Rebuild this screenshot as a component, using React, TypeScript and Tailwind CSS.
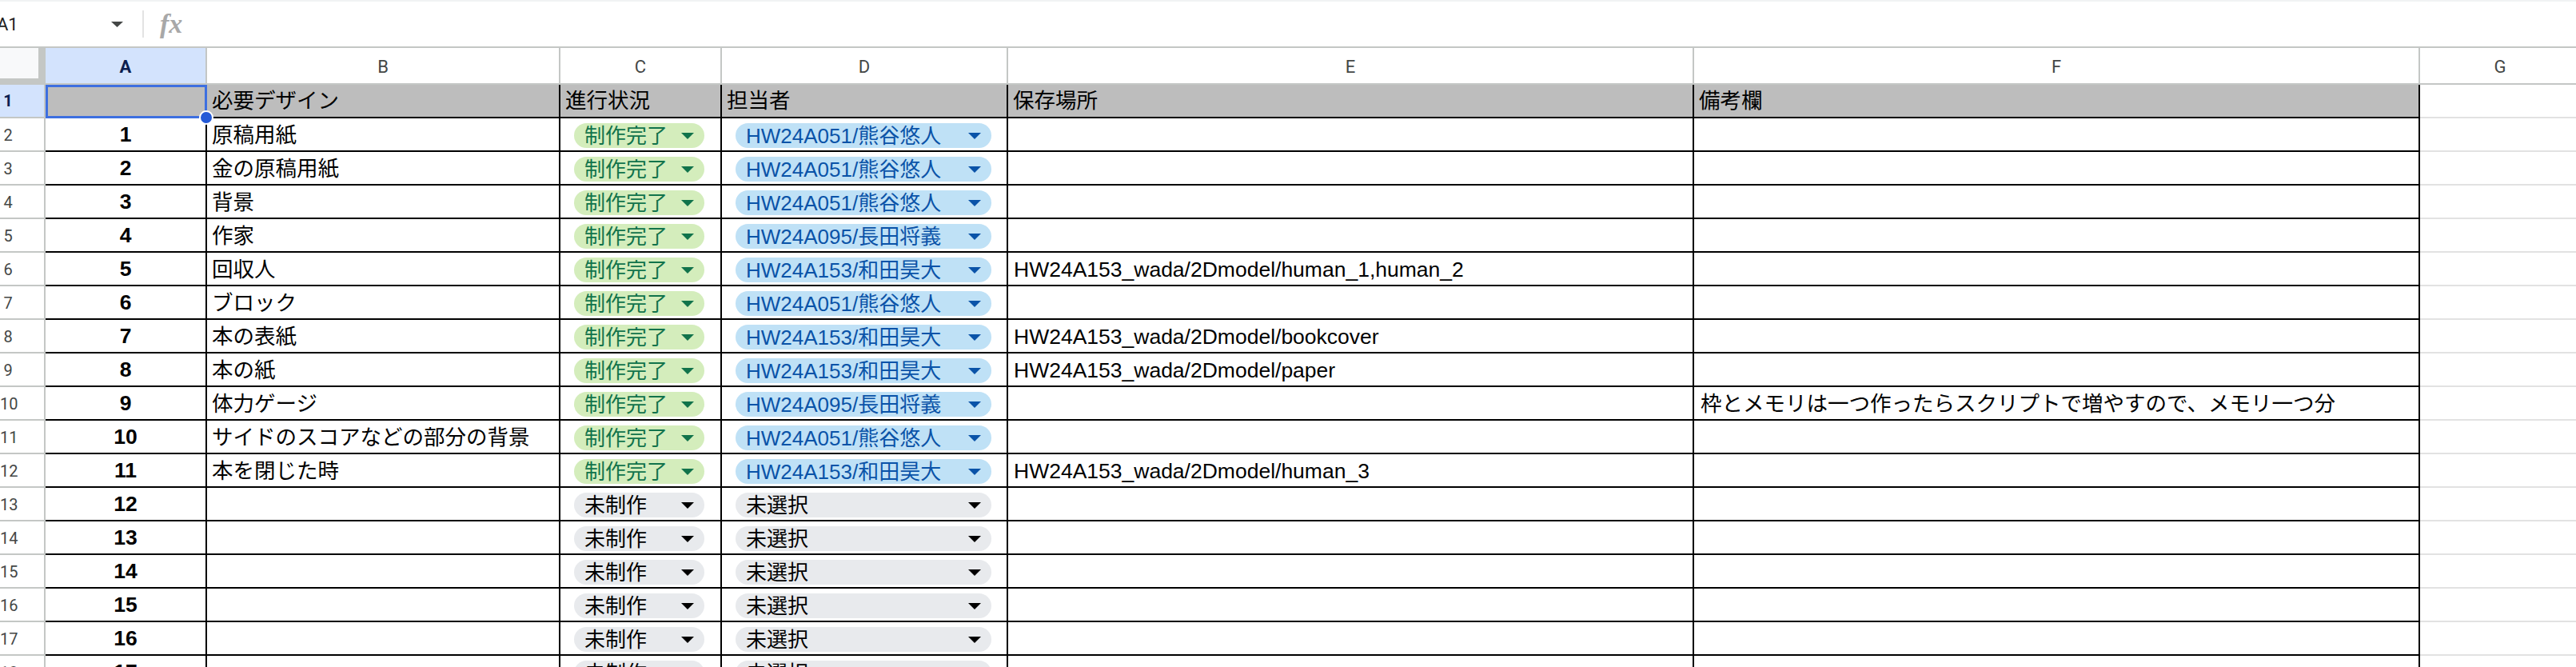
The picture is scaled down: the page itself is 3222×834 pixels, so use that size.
import React from "react";

type Item = {
  name: string;
  done: boolean;
  person?: string;
  path?: string;
  note?: string;
};

const items: Item[] = [
  { name: "原稿用紙", done: true, person: "HW24A051/熊谷悠人" },
  { name: "金の原稿用紙", done: true, person: "HW24A051/熊谷悠人" },
  { name: "背景", done: true, person: "HW24A051/熊谷悠人" },
  { name: "作家", done: true, person: "HW24A095/長田将義" },
  { name: "回収人", done: true, person: "HW24A153/和田昊大", path: "HW24A153_wada/2Dmodel/human_1,human_2" },
  { name: "ブロック", done: true, person: "HW24A051/熊谷悠人" },
  { name: "本の表紙", done: true, person: "HW24A153/和田昊大", path: "HW24A153_wada/2Dmodel/bookcover" },
  { name: "本の紙", done: true, person: "HW24A153/和田昊大", path: "HW24A153_wada/2Dmodel/paper" },
  {
    name: "体力ゲージ",
    done: true,
    person: "HW24A095/長田将義",
    note: "枠とメモリは一つ作ったらスクリプトで増やすので、メモリ一つ分",
  },
  { name: "サイドのスコアなどの部分の背景", done: true, person: "HW24A051/熊谷悠人" },
  { name: "本を閉じた時", done: true, person: "HW24A153/和田昊大", path: "HW24A153_wada/2Dmodel/human_3" },
  { name: "", done: false },
  { name: "", done: false },
  { name: "", done: false },
  { name: "", done: false },
  { name: "", done: false },
  { name: "", done: false },
];

const columns = ["A", "B", "C", "D", "E", "F", "G"];

const Caret = ({ className }: { className: string }) => (
  <svg width="16" height="8" viewBox="0 0 16 8" className={className}>
    <path d="M0 0h16L8 8z" fill="currentColor" />
  </svg>
);

const Chip = ({ label, tone, wide }: { label: string; tone: "green" | "blue" | "gray"; wide?: boolean }) => {
  const tones = {
    green: "bg-[#d4edbc] text-[#11734b]",
    blue: "bg-[#bfe1f6] text-[#0a53a8]",
    gray: "bg-[#e8eaed] text-black",
  };
  return (
    <div
      className={`flex h-[31px] items-center justify-between rounded-full pl-[13px] pr-[13px] ${
        wide ? "w-[320px]" : "w-[163px]"
      } ${tones[tone]}`}
    >
      <span className="whitespace-nowrap text-[26px] leading-none">{label}</span>
      <Caret className={tone === "gray" ? "text-black" : tone === "green" ? "text-[#11734b]" : "text-[#0a53a8]"} />
    </div>
  );
};

const cell = "flex items-center border-r-2 border-b-2 border-black whitespace-nowrap overflow-visible";
const rowHead =
  "flex items-center border-r-2 border-b-2 border-[#c4c7c5] font-['Roboto',sans-serif] text-[20px]";
const emptyCell = "border-r-2 border-b-2 border-[#e2e2e2]";

export default function App() {
  return (
    <div className="h-[834px] w-[3222px] overflow-hidden bg-white font-['Liberation_Sans','Noto_Sans_CJK_JP',sans-serif] text-black">
      {/* name box + formula bar */}
      <div className="flex h-[60px] items-center border-t-2 border-b-2 border-t-[#f1f3f4] border-b-[#c4c7c5]">
        <div className="ml-[-4px] flex w-[182px] items-center">
          <span className="w-[143px] font-['Roboto',sans-serif] text-[22px] text-[#1f1f1f]">A1</span>
          <svg width="15" height="7" viewBox="0 0 15 7" className="text-[#444746]">
            <path d="M0 0h15L7.5 7z" fill="currentColor" />
          </svg>
        </div>
        <div className="h-[34px] w-[2px] bg-[#e3e3e3]" />
        <span className="ml-[20px] font-['Liberation_Serif',serif] text-[34px] font-bold italic leading-none text-[#a8a8a8]">
          fx
        </span>
      </div>

      <div className="grid grid-cols-[57px_202px_442px_202px_358px_858px_908px_202px] grid-rows-[46px] auto-rows-[42px]">
        {/* corner */}
        <div className="bg-[#c4c7c5]">
          <div className="h-[38px] w-[48px] bg-[#f8f9fa]" />
        </div>
        {columns.map((c) => (
          <div
            key={c}
            className={`flex items-center justify-center border-r-2 border-b-2 border-[#c4c7c5] pt-[3px] font-['Roboto',sans-serif] text-[22px] ${
              c === "A" ? "bg-[#d3e3fd] font-bold text-[#0b1e4f]" : "text-[#444746]"
            }`}
          >
            {c}
          </div>
        ))}

        {/* header row */}
        <div className={`${rowHead} bg-[#d3e3fd] font-bold text-[#0b1e4f]`}>
          <span className="w-[20px] text-center">1</span>
        </div>
        <div className={`${cell} relative z-10 bg-[#bdbdbd]`}>
          <div className="absolute top-0 left-0 right-[-2px] bottom-[-2px] border-[3px] border-[#3d6fe0]" />
          <div className="absolute right-[-10px] bottom-[-10px] h-[18px] w-[18px] rounded-full border-2 border-white bg-[#2459d6]" />
        </div>
        {["必要デザイン", "進行状況", "担当者", "保存場所", "備考欄"].map((h) => (
          <div key={h} className={`${cell} bg-[#bdbdbd] pl-[6px] pt-[2px] text-[26.5px]`}>
            {h}
          </div>
        ))}
        <div className={emptyCell} />

        {items.map((it, i) => (
          <React.Fragment key={i}>
            <div className={`${rowHead} pt-[2px] text-[#444746]`}>
              <span className="w-[20px] text-center">{i + 2}</span>
            </div>
            <div className={`${cell} justify-center pt-[2px] text-[26.5px] font-bold`}>{i + 1}</div>
            <div className={`${cell} pl-[6px] pt-[3px] text-[26.5px]`}>{it.name}</div>
            <div className={`${cell} pl-[17px] pt-[3px]`}>
              <Chip label={it.done ? "制作完了" : "未制作"} tone={it.done ? "green" : "gray"} />
            </div>
            <div className={`${cell} pl-[17px] pt-[3px]`}>
              <Chip label={it.person ?? "未選択"} tone={it.person ? "blue" : "gray"} wide />
            </div>
            <div className={`${cell} pl-[7px] pt-[3px] text-[26.5px]`}>{it.path}</div>
            <div className={`${cell} pl-[8px] pt-[3px] text-[26.5px]`}>{it.note}</div>
            <div className={emptyCell} />
          </React.Fragment>
        ))}
      </div>
    </div>
  );
}
